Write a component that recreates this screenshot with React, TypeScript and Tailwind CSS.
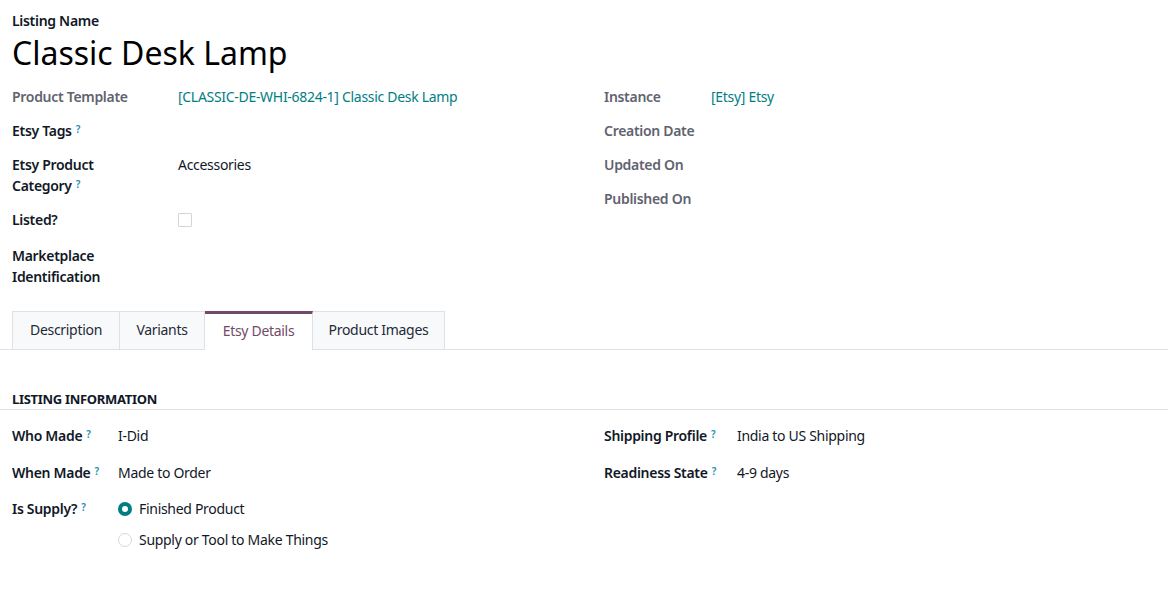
import React from "react";

const Q = () => (
  <sup className="ml-[4px] text-[10px] font-semibold text-[#1b8fb0] relative top-[-3px]">?</sup>
);

function Row({
  label,
  help,
  muted,
  labelW,
  children,
  className = "",
}: {
  label: React.ReactNode;
  help?: boolean;
  muted?: boolean;
  labelW: string;
  children?: React.ReactNode;
  className?: string;
}) {
  return (
    <div className={`flex ${className}`}>
      <div
        className={`${labelW} shrink-0 pr-2 font-semibold leading-[21px] ${
          muted ? "text-[#5f636f]" : "text-[#111827]"
        }`}
      >
        {label}
        {help && <Q />}
      </div>
      <div className="flex-1 leading-[21px] text-[#111827]">{children}</div>
    </div>
  );
}

export default function App() {
  return (
    <div
      className="w-[1168px] h-[601px] bg-white text-[14px] tracking-[-0.3px] text-[#111827] overflow-hidden"
      style={{ fontFamily: '"Noto Sans", "Open Sans", sans-serif' }}
    >
      <div className="px-3 pt-[10px]">
        <div className="font-semibold leading-[21px]">Listing Name</div>
        <div className="text-[32px] leading-[38px] mt-[3px] text-black tracking-normal">Classic Desk Lamp</div>
      </div>

      <div className="grid grid-cols-[592px_1fr] mt-[14px]">
        <div className="pl-3 flex flex-col">
          <Row label="Product Template" muted labelW="w-[166px]" className="mb-[13px]">
            <span className="text-[#017e84]">[CLASSIC-DE-WHI-6824-1] Classic Desk Lamp</span>
          </Row>
          <Row label="Etsy Tags" help labelW="w-[166px]" className="mb-[13px]" />
          <Row
            label={
              <>
                Etsy Product
                <br />
                Category
              </>
            }
            help
            labelW="w-[166px]"
            className="mb-[13px]"
          >
            Accessories
          </Row>
          <Row label="Listed?" labelW="w-[166px]" className="mb-[15px]">
            <div className="h-[21px] flex items-center">
              <span className="block w-[14px] h-[14px] border border-[#d5d5d5] rounded-[1px] bg-white" />
            </div>
          </Row>
          <Row
            label={
              <>
                Marketplace
                <br />
                Identification
              </>
            }
            labelW="w-[166px]"
          />
        </div>
        <div className="pl-3 flex flex-col">
          <Row label="Instance" muted labelW="w-[107px]" className="mb-[13px]">
            <span className="text-[#017e84]">[Etsy] Etsy</span>
          </Row>
          <Row label="Creation Date" muted labelW="w-[107px]" className="mb-[13px]" />
          <Row label="Updated On" muted labelW="w-[107px]" className="mb-[13px]" />
          <Row label="Published On" muted labelW="w-[107px]" />
        </div>
      </div>

      {/* Tabs */}
      <div className="mt-[24px] border-b border-[#dee2e6] flex px-3 h-[39px]">
        <div className="flex h-[39px] whitespace-nowrap">
          <div className="h-[39px] flex items-center border border-[#dee2e6] bg-[#f8f9fa] text-[#1f2937] w-[108px] justify-center pb-[2px]">
            Description
          </div>
          <div className="h-[39px] flex items-center border-t border-r border-b border-[#dee2e6] bg-[#f8f9fa] text-[#1f2937] w-[85px] justify-center pb-[2px]">
            Variants
          </div>
          <div className="h-[39px] flex items-center border-t-[3px] border-t-[#714b67] border-r border-r-[#dee2e6] bg-white text-[#714b67] w-[108px] justify-center relative z-10 pb-[4px]">
            Etsy Details
          </div>
          <div className="h-[39px] flex items-center border-t border-r border-b border-[#dee2e6] bg-[#f8f9fa] text-[#1f2937] w-[132px] justify-center pb-[2px]">
            Product Images
          </div>
        </div>
      </div>

      {/* Listing info */}
      <div className="mt-[40px] px-3 border-b border-[#dee2e6]">
        <div className="text-[13px] font-bold uppercase leading-[19px] text-[#111827]">Listing Information</div>
      </div>

      <div className="grid grid-cols-[592px_1fr] mt-[15px]">
        <div className="pl-3 flex flex-col">
          <Row label="Who Made" help labelW="w-[106px]" className="mb-[16px]">
            I-Did
          </Row>
          <Row label="When Made" help labelW="w-[106px]" className="mb-[15px]">
            Made to Order
          </Row>
          <Row label="Is Supply?" help labelW="w-[106px]">
            <div className="flex flex-col gap-[10px]">
              <div className="flex items-center gap-[7px] h-[21px]">
                <span className="w-[14px] h-[14px] rounded-full border-[4px] border-[#017e84] bg-white" />
                <span>Finished Product</span>
              </div>
              <div className="flex items-center gap-[7px] h-[21px]">
                <span className="w-[14px] h-[14px] rounded-full border border-[#d8d8d8] bg-white" />
                <span>Supply or Tool to Make Things</span>
              </div>
            </div>
          </Row>
        </div>
        <div className="pl-3 flex flex-col">
          <Row label="Shipping Profile" help labelW="w-[133px]" className="mb-[16px]">
            India to US Shipping
          </Row>
          <Row label="Readiness State" help labelW="w-[133px]">
            4-9 days
          </Row>
        </div>
      </div>
    </div>
  );
}
